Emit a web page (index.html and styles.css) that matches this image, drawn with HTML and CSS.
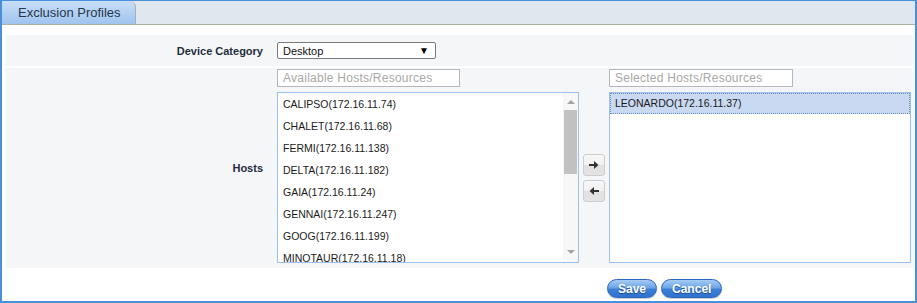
FILE: index.html
```html
<html>

<head>
    <title>Exclusion Profiles</title>
    <link rel="stylesheet" href="styles.css">
</head>

<body>
    <div class="frame">
        <div class="tabbar">
            <div class="tab">Exclusion Profiles</div>
        </div>

        <div class="content">
            <div class="row row-device">
                <div class="label">Device Category</div>
                <div class="value">
                    <div class="select">
                        <span>Desktop</span>
                        <span class="caret">&#9660;</span>
                    </div>
                </div>
            </div>

            <div class="row row-hosts">
                <div class="label">Hosts</div>
                <div class="value picker">
                    <div class="side">
                        <input class="filter" type="text" placeholder="Available Hosts/Resources">
                        <div class="listbox">
                            <ul class="items">
                                <li>CALIPSO(172.16.11.74)</li>
                                <li>CHALET(172.16.11.68)</li>
                                <li>FERMI(172.16.11.138)</li>
                                <li>DELTA(172.16.11.182)</li>
                                <li>GAIA(172.16.11.24)</li>
                                <li>GENNAI(172.16.11.247)</li>
                                <li>GOOG(172.16.11.199)</li>
                                <li>MINOTAUR(172.16.11.18)</li>
                            </ul>
                            <div class="scrollbar">
                                <span class="arrow-up"></span>
                                <span class="thumb"></span>
                                <span class="arrow-down"></span>
                            </div>
                        </div>
                    </div>

                    <div class="movers">
                        <button class="move">
                            <svg width="10" height="8" viewBox="0 0 10 8"><rect x="0" y="3" width="6" height="2" fill="#333"/><polygon points="5,0 9.5,4 5,8" fill="#333"/></svg>
                        </button>
                        <button class="move">
                            <svg width="10" height="8" viewBox="0 0 10 8"><rect x="4" y="3" width="6" height="2" fill="#333"/><polygon points="5,0 0.5,4 5,8" fill="#333"/></svg>
                        </button>
                    </div>

                    <div class="side">
                        <input class="filter filter-wide" type="text" placeholder="Selected Hosts/Resources">
                        <div class="listbox">
                            <ul class="items">
                                <li class="picked">LEONARDO(172.16.11.37)</li>
                            </ul>
                        </div>
                    </div>
                </div>
            </div>

            <div class="actions">
                <button class="pill">Save</button>
                <button class="pill">Cancel</button>
            </div>
        </div>
    </div>
</body>

</html>
```

FILE: styles.css
```css
body {
    margin: 0;
    padding: 0;
    font-family: "Liberation Sans", Arial, sans-serif;
    background-color: #fff;
}

.frame {
    width: 917px;
    height: 303px;
    box-sizing: border-box;
    border: 2px solid #4a8fdc;
    border-top-width: 1px;
    display: flex;
    flex-direction: column;
}

.tabbar {
    height: 23px;
    background-color: #e1e7ef;
    border-bottom: 1px solid #a9b3a3;
    display: flex;
}

.tab {
    width: 134px;
    padding-left: 16px;
    box-sizing: border-box;
    font-size: 13px;
    line-height: 23px;
    color: #25374b;
    background: linear-gradient(#c8def7, #9fc4ee);
    border-right: 1px solid #a2b0c0;
    border-top-right-radius: 6px;
}

.content {
    padding: 10px 2px 0 4px;
}

.row {
    display: flex;
    background-color: #f5f6f8;
}

.row-device {
    height: 31px;
    align-items: center;
    margin-bottom: 2px;
}

.row-hosts {
    height: 200px;
    align-items: center;
}

.label {
    width: 271px;
    box-sizing: border-box;
    padding-right: 14px;
    text-align: right;
    font-size: 11px;
    font-weight: bold;
    color: #1f2d3d;
}

.select {
    width: 159px;
    height: 17px;
    box-sizing: border-box;
    border: 1px solid #7a7a7a;
    border-radius: 2px;
    background-color: #fff;
    display: flex;
    align-items: center;
    justify-content: space-between;
    padding: 0 6px 0 5px;
    font-size: 11px;
    color: #111;
}

.caret {
    font-size: 10px;
    color: #000;
}

.picker {
    display: flex;
    align-items: center;
    align-self: stretch;
}

.side {
    display: flex;
    flex-direction: column;
    padding-top: 1px;
    align-self: flex-start;
}

.filter {
    width: 183px;
    height: 18px;
    box-sizing: border-box;
    border: 1px solid #b4b8bd;
    margin: 0 0 5px 0;
    padding: 0 0 0 5px;
    font-family: "Liberation Sans", Arial, sans-serif;
    font-size: 12px;
    letter-spacing: 0.25px;
    background-color: #fff;
}

.filter-wide {
    width: 184px;
}

.filter::placeholder {
    color: #a8a8a8;
}

.listbox {
    width: 302px;
    height: 171px;
    box-sizing: border-box;
    border: 1px solid #9cc2ec;
    background-color: #fff;
    display: flex;
    overflow: hidden;
}

.items {
    list-style: none;
    margin: 0;
    padding: 0;
    flex: 1;
}

.items li {
    height: 22px;
    line-height: 22px;
    padding-left: 5px;
    font-size: 10.5px;
    color: #1a1a1a;
    white-space: nowrap;
}

.items li.picked {
    background-color: #c8d9f1;
    outline: 1px dotted #6b8cc4;
    outline-offset: -1px;
    height: 21px;
    line-height: 21px;
}

.scrollbar {
    width: 15px;
    background-color: #f7f7f7;
    position: relative;
}

.thumb {
    position: absolute;
    left: 1px;
    right: 1px;
    top: 17px;
    height: 64px;
    background-color: #c1c1c1;
}

.arrow-up,
.arrow-down {
    position: absolute;
    left: 4px;
    width: 0;
    height: 0;
    border-left: 4px solid transparent;
    border-right: 4px solid transparent;
}

.arrow-up {
    top: 7px;
    border-bottom: 4px solid #a3a3a3;
}

.arrow-down {
    top: 157px;
    border-top: 4px solid #a3a3a3;
}

.movers {
    display: flex;
    flex-direction: column;
    gap: 4px;
    margin: 20px 4px 0 4px;
}

.move {
    width: 22px;
    height: 22px;
    padding: 0;
    border: 1px solid #cdcdcd;
    border-radius: 3px;
    background: linear-gradient(#f7f7f7 0%, #f1f1f1 50%, #e1e1e1 50%, #e3e3e3 100%);
    display: flex;
    align-items: center;
    justify-content: center;
}

.actions {
    display: flex;
    gap: 4px;
    margin: 11px 0 0 601px;
}

.pill {
    height: 19px;
    padding: 0 10px;
    border: 1px solid #2a66bd;
    border-radius: 10px;
    background: linear-gradient(#a6ccf4 0%, #6ea6e6 45%, #3b7fd6 55%, #2f73cf 100%);
    color: #fff;
    font-family: "Liberation Sans", Arial, sans-serif;
    font-size: 12px;
    font-weight: bold;
    text-shadow: 0 1px 1px #1d4b8f;
    box-shadow: 0 1px 1px rgba(0, 0, 0, 0.2);
}
```
